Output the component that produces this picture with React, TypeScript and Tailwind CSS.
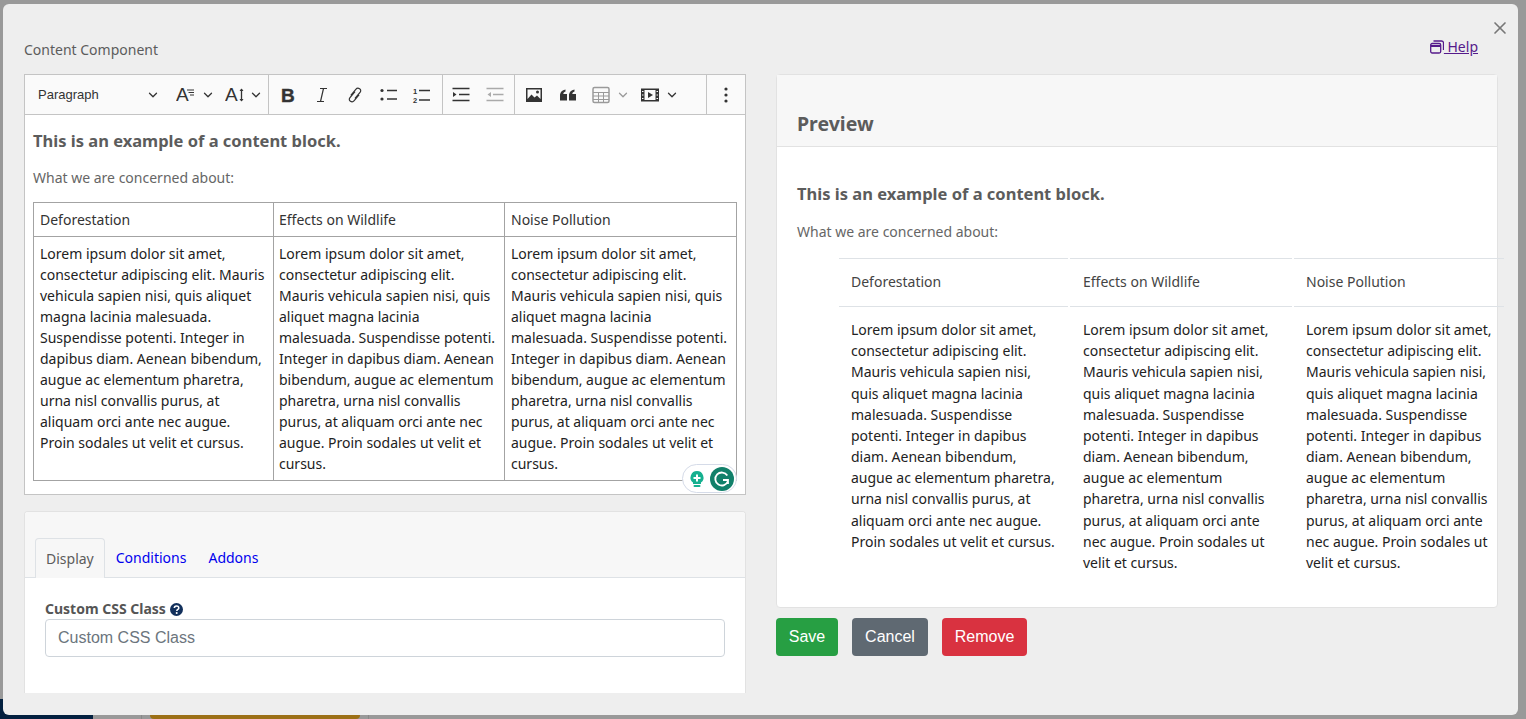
import { ChevronDown, X } from 'lucide-react';

const col1 =
  'Lorem ipsum dolor sit amet, consectetur adipiscing elit. Mauris vehicula sapien nisi, quis aliquet magna lacinia malesuada. Suspendisse potenti. Integer in dapibus diam. Aenean bibendum, augue ac elementum pharetra, urna nisl convallis purus, at aliquam orci ante nec augue. Proin sodales ut velit et cursus.';
const heads = ['Deforestation', 'Effects on Wildlife', 'Noise Pollution'];

function Chev({ muted }: { muted?: boolean }) {
  return <ChevronDown size={14} strokeWidth={2.2} className={muted ? 'text-[#9a9a9a]' : 'text-[#333]'} />;
}

function Sep() {
  return <div className="w-px shrink-0 self-stretch bg-[#c4c4c4]" />;
}

function Ico({ children }: { children: React.ReactNode }) {
  return (
    <svg width="20" height="20" viewBox="0 0 20 20" className="shrink-0">
      {children}
    </svg>
  );
}

function Toolbar() {
  return (
    <div className="flex h-[41px] items-stretch border border-[#c4c4c4] bg-[#fafafa] text-[#333] font-['Liberation_Sans',sans-serif]">
      <div className="flex w-[243px] shrink-0 items-center pl-[13px]">
        <span className="w-[108px] text-[13px]">Paragraph</span>
        <Chev />
        <span className="ml-[16px] flex items-center">
          <Ico>
            <text x="0" y="16" fontSize="19" fontFamily="Liberation Sans" fill="#333">A</text>
            <path d="M11 5h7M12.500 7.500h5.500M14 10h4" stroke="#333" strokeWidth="1" />
          </Ico>
          <span className="ml-[5px]"><Chev /></span>
        </span>
        <span className="ml-[10px] flex items-center">
          <Ico>
            <text x="0" y="16" fontSize="19" fontFamily="Liberation Sans" fill="#333">A</text>
            <path d="M16.500 4v12" stroke="#333" strokeWidth="1.300" fill="none" />
            <path d="M14.500 6l2-2.500 2 2.500zM14.500 14l2 2.500 2-2.500z" fill="#333" />
          </Ico>
          <span className="ml-[4px]"><Chev /></span>
        </span>
      </div>
      <Sep />
      <div className="flex w-[173px] shrink-0 items-center gap-[13.500px] pl-[9px]">
        <Ico>
          <text x="3" y="16.500" fontSize="19" fontWeight="700" fontFamily="Liberation Sans" fill="#333" stroke="#333" strokeWidth="0.400">B</text>
        </Ico>
        <Ico>
          <path d="M8 3.500h7M5 16.500h7M11.500 3.500l-3 13" stroke="#333" strokeWidth="1.200" fill="none" />
        </Ico>
        <Ico>
          <path
            d="M10 6.500 4.800 12.800c-2 2.800 2.200 5.500 4.400 2.900l5-6M10 13.500l5.200-6.300c2-2.800-2.200-5.500-4.400-2.900l-5 6"
            stroke="#333"
            strokeWidth="1.200"
            fill="none"
          />
        </Ico>
        <Ico>
          <circle cx="3" cy="5.500" r="1.600" fill="#333" />
          <circle cx="3" cy="14" r="1.600" fill="#333" />
          <path d="M8 5.500h10M8 14h10" stroke="#333" strokeWidth="1.500" />
        </Ico>
        <Ico>
          <text x="1" y="9" fontSize="7.500" fontWeight="700" fontFamily="Liberation Sans" fill="#333">1</text>
          <text x="1" y="18" fontSize="7.500" fontWeight="700" fontFamily="Liberation Sans" fill="#333">2</text>
          <path d="M7 5.500h11M7 15h11" stroke="#333" strokeWidth="1.500" />
        </Ico>
      </div>
      <Sep />
      <div className="flex w-[71px] shrink-0 items-center gap-[14px] pl-[8px]">
        <Ico>
          <path d="M1.500 3.500h17M8 9.500h10.500M1.500 15.500h17" stroke="#333" strokeWidth="1.500" />
          <path d="M2 7v5l3.500-2.500z" fill="#333" />
        </Ico>
        <Ico>
          <path d="M1.500 3.500h17M8 9.500h10.500M1.500 15.500h17" stroke="#aaa" strokeWidth="1.500" />
          <path d="M6 7v5L2.500 9.500z" fill="#aaa" />
        </Ico>
      </div>
      <Sep />
      <div className="flex w-[191px] shrink-0 items-center pl-[9px]">
        <Ico>
          <path fillRule="evenodd" d="M2 3h16v14H2zM3.500 4.500v9.500l4-4.500 3 3 2.500-2 3.500 3.500V4.500z" fill="#333" />
          <circle cx="13.500" cy="7" r="1.500" fill="#333" />
        </Ico>
        <span className="ml-[14px]">
          <Ico>
            <path d="M2 9.500C2.500 7 4 5 7.500 4.500v2C6 7 5.300 8 5.300 9H9v6.500H2zM11 9.500c.5-2.500 2-4.500 5.500-5v2C15 7 14.300 8 14.300 9H18v6.500h-7z" fill="#333" />
          </Ico>
        </span>
        <span className="ml-[13px]">
          <Ico>
            <rect x="2" y="2.500" width="16" height="15" rx="1.500" fill="none" stroke="#9a9a9a" strokeWidth="1.500" />
            <path d="M2 7.500h16M2 11h16M2 14.500h16M7.500 7v10M12.500 7v10" stroke="#9a9a9a" strokeWidth="1" />
          </Ico>
        </span>
        <span className="ml-[5px]"><Chev muted /></span>
        <span className="ml-[10px]">
          <Ico>
            <path fillRule="evenodd" d="M1 3.500h18v13H1zM4.500 5v10h11V5z" fill="#333" />
            <path d="M8 7v6l5-3z" fill="#333" />
            <path d="M2 6.500h1.500M2 10h1.500M2 13.500h1.500M16.500 6.500H18M16.500 10H18M16.500 13.500H18" stroke="#fafafa" strokeWidth="1" />
          </Ico>
        </span>
        <span className="ml-[5px]"><Chev /></span>
      </div>
      <Sep />
      <div className="flex flex-1 items-center justify-center">
        <Ico>
          <circle cx="10" cy="4" r="1.600" fill="#333" />
          <circle cx="10" cy="10" r="1.600" fill="#333" />
          <circle cx="10" cy="16" r="1.600" fill="#333" />
        </Ico>
      </div>
    </div>
  );
}

function Editor() {
  return (
    <div className="relative h-[380px] border border-t-0 border-[#c4c4c4] bg-white px-2 pt-[15px]">
      <p className="text-[16.500px] leading-[22px] font-bold text-[#5c5c5c]">This is an example of a content block.</p>
      <p className="mt-[15px] text-[14px] leading-[21px] text-[#666]">What we are concerned about:</p>
      <table className="mt-[14px] w-[703px] table-fixed border-collapse text-[14px] leading-[21px] text-[#222]">
        <colgroup>
          <col className="w-[240px]" />
          <col className="w-[231px]" />
          <col className="w-[232px]" />
        </colgroup>
        <thead>
          <tr>
            {heads.map((h, i) => (
              <td key={h} className={`h-[34px] border border-[#a3a3a3] px-[6px] align-middle text-[#333] ${i === 1 ? 'pl-[5px]' : ''}`}>
                {h}
              </td>
            ))}
          </tr>
        </thead>
        <tbody>
          <tr>
            {heads.map((h, i) => (
              <td key={h} className={`h-[244px] border border-[#a3a3a3] px-[6px] pt-[6px] pb-[5px] align-top ${i === 1 ? 'pl-[5px]' : ''}`}>
                {col1}
              </td>
            ))}
          </tr>
        </tbody>
      </table>
      <div className="absolute right-[8px] bottom-[1px] flex h-[29px] w-[55px] items-center gap-[5px] rounded-full border border-[#d5dbe8] bg-white pl-[6px]">
        <svg width="16" height="18" viewBox="0 0 16 18">
          <path d="M8 1a6.500 6.500 0 0 0-4 11.600V14h8v-1.400A6.500 6.500 0 0 0 8 1z" fill="#15b08f" />
          <rect x="4.500" y="15" width="7" height="2" rx="1" fill="#15b08f" />
          <path d="M7 4.500h2V7h2.500v2H9v2.500H7V9H4.500V7H7z" fill="#fff" />
        </svg>
        <svg width="24" height="24" viewBox="0 0 24 24">
          <circle cx="12" cy="12" r="12" fill="#11806a" />
          <path d="M17.300 8.500a6.500 6.500 0 1 0 .7 5.500M18 17v-4h-5" stroke="#fff" strokeWidth="1.800" fill="none" />
        </svg>
      </div>
    </div>
  );
}

function Settings() {
  return (
    <div className="mt-[16px] h-[182px] overflow-hidden rounded-t border border-b-0 border-[#e2e2e2] bg-white">
      <div className="flex h-[66px] items-end border-b border-[#dee2e6] bg-[#f7f7f7] pl-[10px] text-[14px]">
        <div className="mb-[-1px] flex h-[40px] items-center rounded-t border border-b-0 border-[#dee2e6] bg-[#f7f7f7] px-[10px] pb-[1px] text-[#5c5c5c]">
          Display
        </div>
        <div className="flex h-[38px] items-center px-[11px] pb-[2px] text-[#0000ee]">Conditions</div>
        <div className="flex h-[38px] items-center px-[11px] pb-[2px] text-[#0000ee]">Addons</div>
      </div>
      <div className="px-5 pt-[22px]">
        <div className="flex items-center gap-1 text-[14px] leading-[18px] font-bold text-[#555]">
          Custom CSS Class
          <svg width="13" height="13" viewBox="0 0 13 13" className="shrink-0">
            <circle cx="6.500" cy="6.500" r="6.500" fill="#12305c" />
            <path d="M4.300 5.100c0-2.800 4.500-2.900 4.500-.2 0 1.600-2 1.500-2 3.100" stroke="#fff" strokeWidth="1.500" fill="none" />
            <circle cx="6.700" cy="10" r="1" fill="#fff" />
          </svg>
        </div>
        <input
          readOnly
          placeholder="Custom CSS Class"
          className="mt-[1px] h-[38px] w-full rounded border border-[#ced4da] bg-white px-3 font-['Liberation_Sans',sans-serif] text-[16px] placeholder:text-[#6c757d]"
        />
      </div>
    </div>
  );
}

function Preview() {
  return (
    <div className="h-[534px] rounded border border-[#e2e2e2] bg-white">
      <div className="flex h-[72px] items-end border-b border-[#e2e2e2] bg-[#f7f7f7] px-5 pb-[9px] text-[19.500px] leading-[27px] font-bold text-[#5c5c5c]">
        Preview
      </div>
      <div className="pt-[36px] pl-5">
        <p className="text-[16.500px] leading-[22px] font-bold text-[#5c5c5c]">This is an example of a content block.</p>
        <p className="mt-[16px] text-[14px] leading-[21px] text-[#666]">What we are concerned about:</p>
        <div className="mt-[16px] ml-[42px] flex w-[665px] gap-[2px] text-[14px] leading-[21.170px] text-[#222]">
          {heads.map((h, i) => (
            <div key={h} className={i === 0 ? 'w-[229px]' : i === 1 ? 'w-[222px]' : 'w-[210px]'}>
              <div className={`flex h-[49px] items-center border-y border-[#dee2e6] px-3 pb-[1px] text-[#444] ${i === 1 ? 'pl-[13px]' : ''}`}>{h}</div>
              <div className={`px-3 pt-[12px] ${i === 1 ? 'pl-[13px]' : ''}`}>{col1}</div>
            </div>
          ))}
        </div>
      </div>
    </div>
  );
}

export default function App() {
  return (
    <div className="relative flex h-[719px] flex-col justify-end overflow-hidden bg-[#999] font-['Noto_Sans',sans-serif]">
      <div className="flex h-[20px] items-start">
        <div className="h-full w-[93px] bg-[#03203f]" />
        <div className="ml-[48px] h-full w-px bg-[#888]" />
        <div className="ml-[8px] h-full w-[210px] rounded-b bg-[#9c7016]" />
        <div className="ml-[8px] h-full w-px bg-[#888]" />
      </div>
      <div className="absolute top-[4px] left-[3px] h-[711px] w-[1515px] rounded-md bg-[#eee]">
        <div className="flex h-[70px] items-start justify-between pr-[40px] pl-[21px]">
          <span className="mt-[37px] text-[14px] leading-[18px] text-[#5c5c5c]">Content Component</span>
          <span className="mt-[33px] flex items-center text-[14px] leading-[19px] whitespace-pre text-[#551a8b] underline">
            <svg width="14" height="14" viewBox="0 0 14 14" fill="none" stroke="#551a8b" strokeWidth="1.300">
              <rect x="0.700" y="3.500" width="10" height="9.500" rx="1.500" />
              <path d="M1 6h9.500" strokeWidth="2" />
              <path d="M3.500 1h8a2 2 0 0 1 2 2v7" />
            </svg>
            {' Help'}
          </span>
        </div>
        <X size={20} strokeWidth={2} className="absolute top-[14px] right-[8px] text-[#777]" />
        <div className="flex gap-[30px] pl-[21px]">
          <div className="w-[722px]">
            <Toolbar />
            <Editor />
            <Settings />
          </div>
          <div className="w-[722px]">
            <Preview />
            <div className="mt-[10px] flex gap-[14px] font-['Liberation_Sans',sans-serif] text-[16px] text-white">
              <button className="h-[38px] w-[62px] rounded bg-[#279f43]">Save</button>
              <button className="h-[38px] w-[76px] rounded bg-[#5f6972]">Cancel</button>
              <button className="h-[38px] w-[85px] rounded bg-[#d93240]">Remove</button>
            </div>
          </div>
        </div>
      </div>
    </div>
  );
}
